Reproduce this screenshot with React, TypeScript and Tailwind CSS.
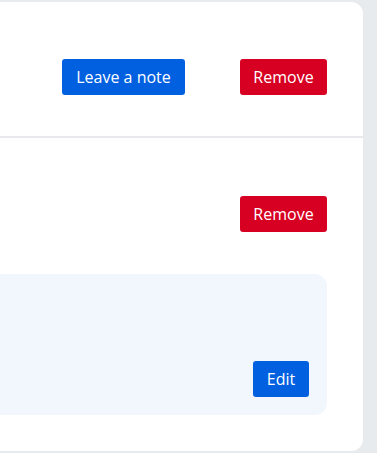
import React from 'react';

const btn = 'h-9 rounded-[3px] px-[14px] text-[16px] font-medium leading-none text-white flex items-center justify-center';

const App = () => {
  return (
    <div className="w-[377px] h-[453px] overflow-hidden bg-[#e8ebee] pt-[2px] pb-[2px] pr-[14px] font-['Open_Sans',sans-serif]">
      <div className="ml-[-40px] h-full rounded-r-xl bg-white flex flex-col">
        {/* Top row */}
        <div className="flex items-center justify-end gap-[55px] pt-[57px] pb-[41px] pr-[36px]">
          <button className={`${btn} w-[123px] bg-[#0060df]`}>Leave a note</button>
          <button className={`${btn} w-[87px] bg-[#d70022]`}>Remove</button>
        </div>
        <div className="h-[2px] bg-[#e7e9ec]" />
        {/* Second item */}
        <div className="flex flex-col pt-[58px] pr-[36px] pb-[36px] flex-1">
          <div className="flex justify-end">
            <button className={`${btn} w-[87px] bg-[#d70022]`}>Remove</button>
          </div>
          <div className="mt-[42px] h-[141px] rounded-xl bg-[#f2f7fd] flex items-end justify-end p-[18px]">
            <button className={`${btn} w-[56px] bg-[#0060df]`}>Edit</button>
          </div>
        </div>
      </div>
    </div>
  );
};

export default App;
